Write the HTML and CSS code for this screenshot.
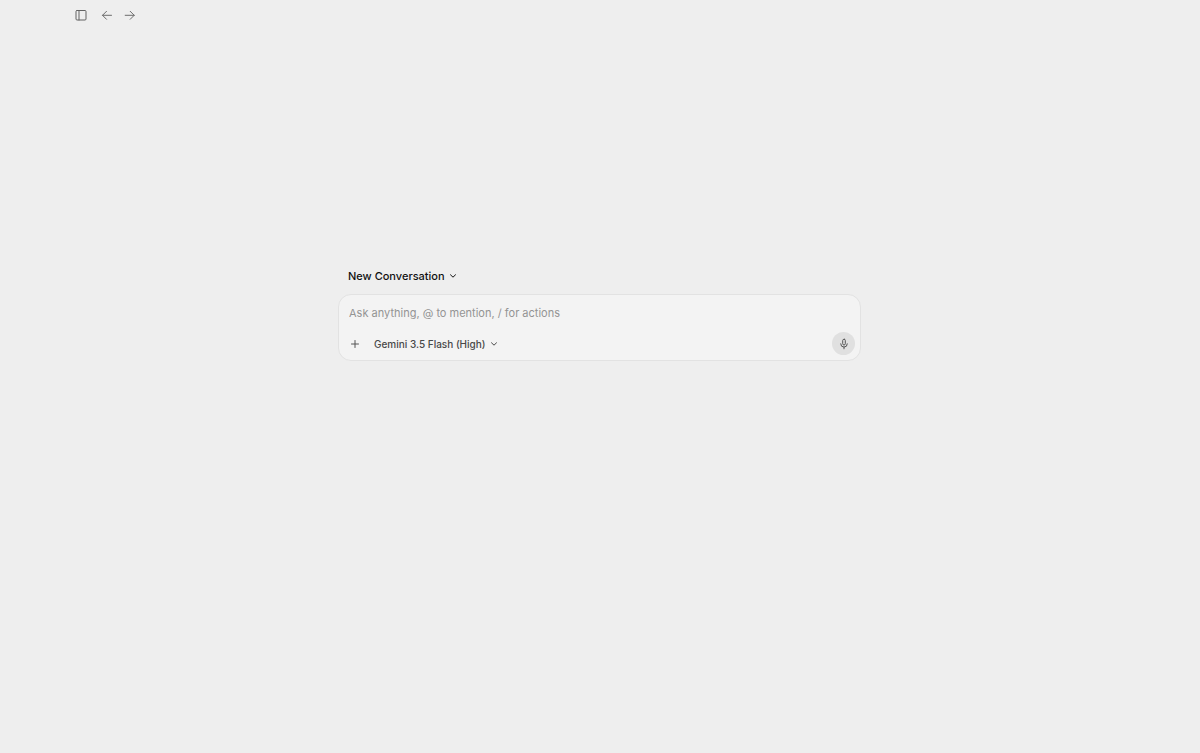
FILE: index.html
```html
<!DOCTYPE html>
<html lang="en">
<head>
  <meta charset="UTF-8" />
  <meta name="viewport" content="width=device-width, initial-scale=1.0" />
  <title>New Conversation</title>
  <link rel="stylesheet" href="styles.css">
</head>
<body>
  <header class="topbar">
    <button class="icon-btn sidebar-btn" type="button" aria-label="Toggle sidebar">
      <svg width="12" height="12" viewBox="0 0 12 12">
        <rect x="1" y="1.5" width="10" height="9.5" rx="1" />
        <path d="M4 1.5V11" />
      </svg>
    </button>
    <button class="icon-btn nav-btn" type="button" aria-label="Back">
      <svg width="12" height="12" viewBox="0 0 12 12">
        <path d="M10.5 6.3h-9M5.5 2.3l-4 4 4 4" />
      </svg>
    </button>
    <button class="icon-btn nav-btn" type="button" aria-label="Forward">
      <svg width="12" height="12" viewBox="0 0 12 12">
        <path d="M1.2 6.3h9M6.2 2.3l4 4-4 4" />
      </svg>
    </button>
  </header>

  <main class="content">
    <div class="panel">
      <div class="dropdown project">
        <select aria-label="Conversation">
          <option>New Conversation</option>
        </select>
        <svg class="chevron" width="8" height="8" viewBox="0 0 8 8">
          <path d="M1.5 2.8L4 5.2l2.5-2.4" />
        </svg>
      </div>

      <form class="composer">
        <input class="prompt" type="text" aria-label="Message" placeholder="Ask anything, @ to mention, / for actions">
        <div class="toolbar">
          <button class="icon-btn add-btn" type="button" aria-label="Add context">
            <svg width="10" height="10" viewBox="0 0 10 10">
              <path d="M5 1.5v7M1.5 5h7" />
            </svg>
          </button>
          <div class="dropdown model">
            <select aria-label="Model">
              <option>Gemini 3.5 Flash (High)</option>
            </select>
            <svg class="chevron" width="8" height="8" viewBox="0 0 8 8">
              <path d="M1.5 2.8L4 5.2l2.5-2.4" />
            </svg>
          </div>
          <button class="icon-btn mic-btn" type="button" aria-label="Voice input">
            <svg width="12" height="12" viewBox="0 0 12 12">
              <rect x="4.7" y="1.2" width="2.6" height="5.8" rx="1.3" />
              <path d="M2.7 5.8a3.3 3.3 0 0 0 6.6 0M6 9.1v1.7" />
            </svg>
          </button>
        </div>
      </form>
    </div>
  </main>
</body>
</html>
```
FILE: styles.css
```css
* {
  box-sizing: border-box;
}

body {
  margin: 0;
  min-height: 100vh;
  display: flex;
  flex-direction: column;
  background: #eeeeee;
  color: #111111;
  font-family: Inter, sans-serif;
}

button,
input,
select {
  margin: 0;
  padding: 0;
  border: none;
  background: none;
  color: inherit;
  font-family: inherit;
}

svg {
  display: block;
  fill: none;
  stroke: currentColor;
  stroke-linecap: round;
  stroke-linejoin: round;
}

/* top bar */
.topbar {
  display: flex;
  align-items: center;
  gap: 3px;
  padding: 5px 0 5px 71px;
}

.icon-btn {
  display: flex;
  align-items: center;
  justify-content: center;
  width: 20px;
  height: 20px;
  cursor: pointer;
}

.sidebar-btn {
  margin-right: 3px;
  color: #636363;
}

.nav-btn {
  color: #6c6c6c;
}

/* new conversation panel */
.content {
  flex: 1;
  padding: 236px 17px 16px 16px;
}

.panel {
  max-width: 523px;
  margin: 0 auto;
}

.dropdown {
  display: inline-flex;
  align-items: center;
}

.dropdown select {
  appearance: none;
  font-weight: 500;
  cursor: pointer;
}

.chevron {
  margin-left: 4px;
  pointer-events: none;
}

.project {
  display: flex;
  padding-left: 10px;
  margin-bottom: 8px;
}

.project select {
  height: 20px;
  font-size: 11px;
}

.composer {
  padding: 9px 5px 5px;
  background: #f3f3f3;
  border: 1px solid #e2e2e2;
  border-radius: 13px;
}

.prompt {
  display: block;
  width: 100%;
  height: 18px;
  padding: 0 5px;
  font-size: 11px;
  outline: none;
}

.prompt::placeholder {
  color: #949494;
  opacity: 1;
}

.toolbar {
  display: flex;
  align-items: center;
  margin-top: 10px;
}

.add-btn {
  margin-left: 1px;
  color: #555555;
}

.model {
  margin-left: 9px;
  color: #484848;
}

.model select {
  height: 20px;
  font-size: 10px;
}

.mic-btn {
  width: 23px;
  height: 23px;
  margin-left: auto;
  border-radius: 50%;
  background: #e0e0e0;
  color: #555555;
}
```
